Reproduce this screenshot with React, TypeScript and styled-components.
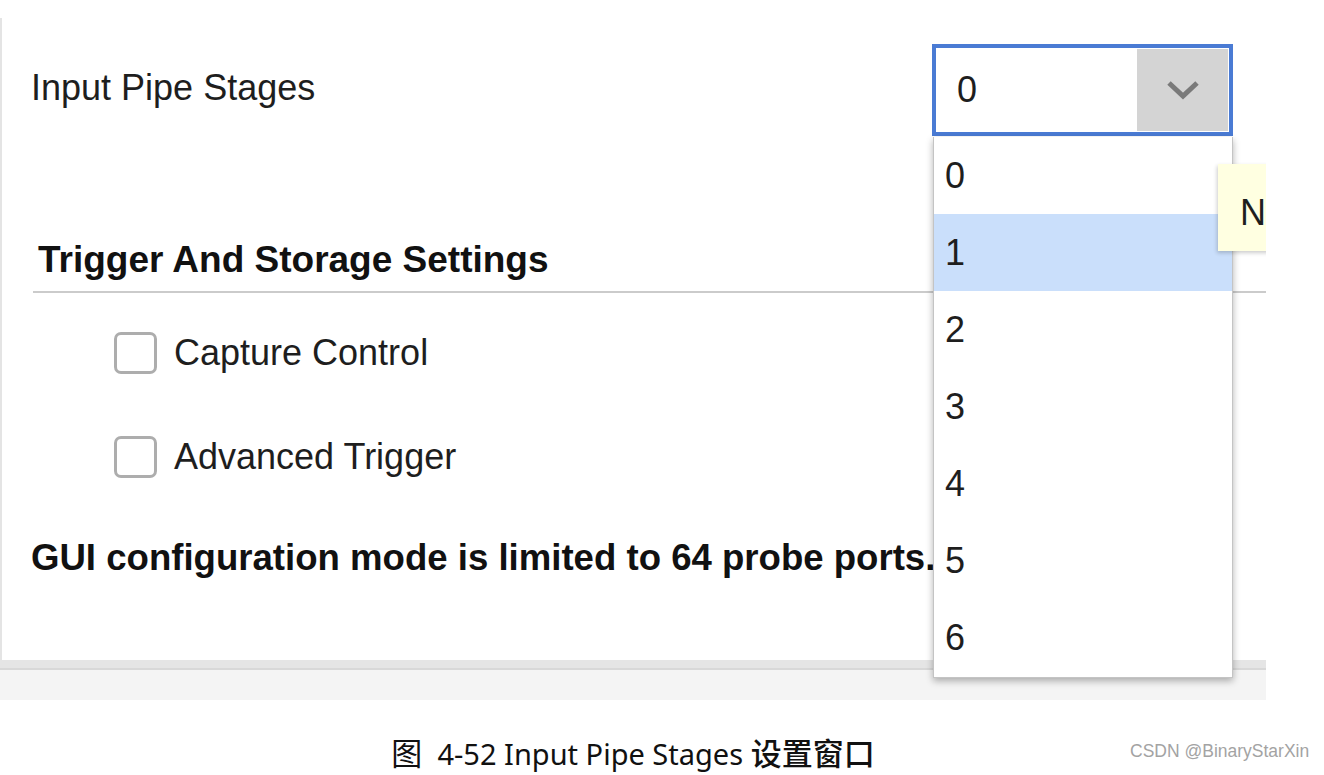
import styled, { createGlobalStyle } from 'styled-components'

const GlobalStyle = createGlobalStyle`
  html, body {
    margin: 0;
    padding: 0;
    background: #ffffff;
  }
  body {
    font-family: 'Liberation Sans', Arial, sans-serif;
    color: #1e1e1e;
  }
`

const options = ['0', '1', '2', '3', '4', '5', '6']

const Page = styled.div`
  position: relative;
  width: 1324px;
  height: 775px;
  overflow: hidden;
`

const Frame = styled.div`
  position: relative;
  width: 1266px;
  height: 700px;
  overflow: hidden;
  display: flex;
  flex-direction: column;
`

const Panel = styled.div`
  margin-top: 18px;
  height: 642px;
  box-sizing: border-box;
  border-left: 2px solid #e4e4e4;
  padding: 26px 0 0 29px;
  display: flex;
  flex-direction: column;
`

const FieldRow = styled.div`
  display: flex;
  align-items: center;
  height: 92px;
`

const FieldLabel = styled.span`
  font-size: 36px;
  line-height: 36px;
  padding-bottom: 4px;
`

const SelectBox = styled.div`
  margin-left: auto;
  margin-right: 33px;
  width: 301px;
  height: 92px;
  box-sizing: border-box;
  border: 4px solid #4a7bd4;
  padding: 1px;
  display: flex;
`

const SelectValue = styled.div`
  flex: 1;
  display: flex;
  align-items: center;
  padding-left: 20px;
  background: #ffffff;
  font-size: 36px;
  line-height: 36px;
`

const SelectButton = styled.div`
  width: 91px;
  background: #d4d4d4;
  display: flex;
  align-items: center;
  justify-content: center;
`

const Section = styled.div`
  margin: 106px 0 0 2px;
  display: flex;
  flex-direction: column;
`

const SectionTitle = styled.h2`
  margin: 0;
  padding: 0 0 13px 5px;
  border-bottom: 2px solid #cbcbcb;
  font-size: 37px;
  line-height: 36px;
  font-weight: 700;
  color: #111111;
`

const CheckList = styled.div`
  margin-top: 39px;
  display: flex;
  flex-direction: column;
  gap: 62px;
  padding-left: 81px;
`

const CheckRow = styled.label`
  display: flex;
  align-items: center;
  gap: 17px;
  font-size: 36px;
  line-height: 36px;
`

const CheckBox = styled.span`
  width: 43px;
  height: 42px;
  box-sizing: border-box;
  border: 3px solid #adadad;
  border-radius: 7px;
  background: #ffffff;
`

const Note = styled.p`
  margin: 62px 0 0 0;
  font-size: 36.6px;
  line-height: 36px;
  font-weight: 700;
  color: #111111;
  white-space: nowrap;
`

const FooterBand = styled.div`
  height: 40px;
  background: linear-gradient(
    to bottom,
    #e5e5e5 0,
    #e5e5e5 8px,
    #d8d8d8 8px,
    #d8d8d8 10px,
    #f4f4f4 10px
  );
`

const Menu = styled.ul`
  position: absolute;
  left: 933px;
  top: 137px;
  width: 300px;
  box-sizing: border-box;
  margin: 0;
  padding: 0 0 1px 0;
  list-style: none;
  background: #ffffff;
  border: 1px solid #c4c4c4;
  border-top: none;
  box-shadow: 0 3px 7px rgba(0, 0, 0, 0.3);
  z-index: 2;
`

const MenuItem = styled.li<{ active?: boolean }>`
  height: 77px;
  padding-left: 11px;
  font-size: 36px;
  line-height: 77px;
  background: ${(p) => (p.active ? '#cadffb' : '#ffffff')};
`

const Tooltip = styled.div`
  position: absolute;
  left: 1218px;
  top: 164px;
  width: 300px;
  height: 87px;
  box-sizing: border-box;
  padding: 10px 0 0 22px;
  background: #ffffe1;
  box-shadow: -1px 2px 4px rgba(0, 0, 0, 0.2);
  font-size: 36px;
  line-height: 77px;
  white-space: nowrap;
  z-index: 3;
`

const Caption = styled.div`
  width: 1266px;
  padding-top: 32px;
  text-align: center;
  font-family: 'Noto Sans', 'Noto Sans CJK SC', sans-serif;
  font-size: 29px;
  line-height: 40px;
  color: #111111;
  white-space: pre;
`

const Han = styled.span<{ strong?: boolean }>`
  font-family: 'Noto Sans CJK SC', sans-serif;
  font-size: 31px;
  font-weight: ${(p) => (p.strong ? 500 : 400)};
`

const Watermark = styled.div`
  position: absolute;
  left: 1130px;
  top: 741px;
  font-size: 17.5px;
  line-height: 20px;
  color: #a3a3a3;
  text-shadow: 0 0 1px #ffffff;
`

const Chevron = () => (
  <svg width='34' height='20' viewBox='0 0 34 20'>
    <polyline
      points='3,3 17,16 31,3'
      fill='none'
      stroke='#7a7a7a'
      strokeWidth='5'
    />
  </svg>
)

const App = () => {
  return (
    <Page>
      <GlobalStyle />
      <Frame>
        <Panel>
          <FieldRow>
            <FieldLabel>Input Pipe Stages</FieldLabel>
            <SelectBox>
              <SelectValue>0</SelectValue>
              <SelectButton>
                <Chevron />
              </SelectButton>
            </SelectBox>
          </FieldRow>
          <Section>
            <SectionTitle>Trigger And Storage Settings</SectionTitle>
            <CheckList>
              <CheckRow>
                <CheckBox />
                Capture Control
              </CheckRow>
              <CheckRow>
                <CheckBox />
                Advanced Trigger
              </CheckRow>
            </CheckList>
          </Section>
          <Note>GUI configuration mode is limited to 64 probe ports.</Note>
        </Panel>
        <FooterBand />
        <Menu>
          {options.map((o) => (
            <MenuItem key={o} active={o === '1'}>
              {o}
            </MenuItem>
          ))}
        </Menu>
        <Tooltip>Number of input pipe stages</Tooltip>
      </Frame>
      <Caption>
        <Han>图</Han>
        {'  4-52 Input Pipe Stages '}
        <Han strong>设置窗口</Han>
      </Caption>
      <Watermark>CSDN @BinaryStarXin</Watermark>
    </Page>
  )
}

export default App
